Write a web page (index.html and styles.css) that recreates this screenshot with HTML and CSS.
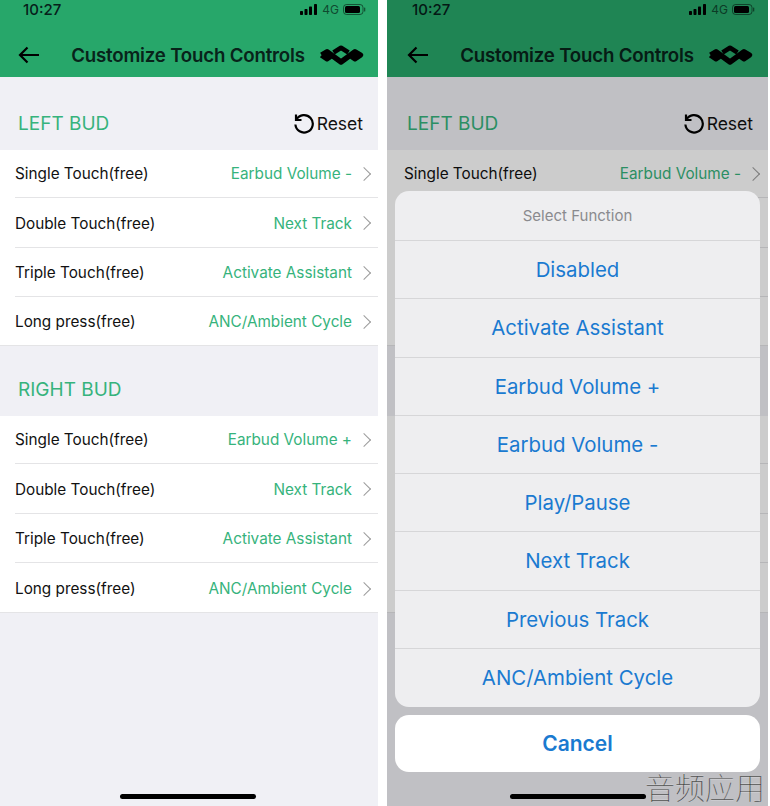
FILE: index.html
```html
<!DOCTYPE html>
<html lang="en">
<head>
    <meta charset="UTF-8">
    <meta name="viewport" content="width=device-width, initial-scale=1.0">
    <title>Customize Touch Controls</title>
    <link rel="stylesheet" href="styles.css">
</head>
<body>

<div class="shots">

    <div class="phone">
        <div class="top">
            <div class="status">
                <span class="time">10:27</span>
                <div class="status-icons">
                    <svg width="18" height="11" viewBox="0 0 18 11"><rect x="0" y="7" width="3" height="4" rx=".7"/><rect x="4.5" y="5" width="3" height="6" rx=".7"/><rect x="9" y="2.5" width="3" height="8.5" rx=".7"/><rect x="14" y="0" width="3" height="11" rx=".7"/></svg>
                    <span class="net">4G</span>
                    <svg width="23" height="11" viewBox="0 0 23 11"><rect x=".5" y=".5" width="19.5" height="10" rx="3" fill="none" stroke="#000" stroke-opacity=".5"/><rect x="2" y="2" width="15" height="7" rx="1.5"/><rect x="21" y="3.5" width="1.3" height="4" rx=".6" opacity=".5"/></svg>
                </div>
            </div>
            <div class="nav">
                <svg class="back" width="22" height="18" viewBox="0 0 22 18"><path d="M21 9H2M9.5 1.5L2 9l7.5 7.5" fill="none" stroke="#000" stroke-width="2.2"/></svg>
                <h1>Customize Touch Controls</h1>
                <svg class="logo" width="46" height="20" viewBox="0 0 46 20"><path d="M3.5 10l5.500-3.200 14 10.200L37 6.800l5.500 3.200-5.500 3.800-5.500-3.800M14.500 10L9 13.800 3.500 10" fill="none" stroke="#000" stroke-width="5.400" stroke-linejoin="round"/><path d="M15.500 7.500L23 2.800l7.500 4.700" fill="none" stroke="#000" stroke-width="4.600" stroke-linejoin="round"/></svg>
            </div>
        </div>

        <div class="section-head">
            <h2>LEFT BUD</h2>
            <div class="reset">
                <svg width="22" height="22" viewBox="0 0 22 22"><path d="M3 2.5V8h5.500M3.500 7.500A8.700 8.700 0 1 1 2.400 12.500" fill="none" stroke="#000" stroke-width="2.200"/></svg>
                Reset
            </div>
        </div>
        <div class="list">
            <div class="row"><span>Single Touch(free)</span><span class="value">Earbud Volume -</span><i class="chev"></i></div>
            <div class="row"><span>Double Touch(free)</span><span class="value">Next Track</span><i class="chev"></i></div>
            <div class="row"><span>Triple Touch(free)</span><span class="value">Activate Assistant</span><i class="chev"></i></div>
            <div class="row"><span>Long press(free)</span><span class="value">ANC/Ambient Cycle</span><i class="chev"></i></div>
        </div>

        <div class="section-head second">
            <h2>RIGHT BUD</h2>
        </div>
        <div class="list">
            <div class="row"><span>Single Touch(free)</span><span class="value">Earbud Volume +</span><i class="chev"></i></div>
            <div class="row"><span>Double Touch(free)</span><span class="value">Next Track</span><i class="chev"></i></div>
            <div class="row"><span>Triple Touch(free)</span><span class="value">Activate Assistant</span><i class="chev"></i></div>
            <div class="row"><span>Long press(free)</span><span class="value">ANC/Ambient Cycle</span><i class="chev"></i></div>
        </div>
        <div class="home"></div>
    </div>

    <div class="phone">
        <div class="top">
            <div class="status">
                <span class="time">10:27</span>
                <div class="status-icons">
                    <svg width="18" height="11" viewBox="0 0 18 11"><rect x="0" y="7" width="3" height="4" rx=".7"/><rect x="4.5" y="5" width="3" height="6" rx=".7"/><rect x="9" y="2.5" width="3" height="8.5" rx=".7"/><rect x="14" y="0" width="3" height="11" rx=".7"/></svg>
                    <span class="net">4G</span>
                    <svg width="23" height="11" viewBox="0 0 23 11"><rect x=".5" y=".5" width="19.5" height="10" rx="3" fill="none" stroke="#000" stroke-opacity=".5"/><rect x="2" y="2" width="15" height="7" rx="1.5"/><rect x="21" y="3.5" width="1.3" height="4" rx=".6" opacity=".5"/></svg>
                </div>
            </div>
            <div class="nav">
                <svg class="back" width="22" height="18" viewBox="0 0 22 18"><path d="M21 9H2M9.5 1.5L2 9l7.5 7.5" fill="none" stroke="#000" stroke-width="2.2"/></svg>
                <h1>Customize Touch Controls</h1>
                <svg class="logo" width="46" height="20" viewBox="0 0 46 20"><path d="M3.5 10l5.500-3.200 14 10.200L37 6.800l5.500 3.200-5.500 3.800-5.500-3.800M14.500 10L9 13.800 3.500 10" fill="none" stroke="#000" stroke-width="5.400" stroke-linejoin="round"/><path d="M15.500 7.500L23 2.800l7.500 4.700" fill="none" stroke="#000" stroke-width="4.600" stroke-linejoin="round"/></svg>
            </div>
        </div>

        <div class="section-head">
            <h2>LEFT BUD</h2>
            <div class="reset">
                <svg width="22" height="22" viewBox="0 0 22 22"><path d="M3 2.5V8h5.500M3.500 7.500A8.700 8.700 0 1 1 2.400 12.500" fill="none" stroke="#000" stroke-width="2.200"/></svg>
                Reset
            </div>
        </div>
        <div class="list">
            <div class="row"><span>Single Touch(free)</span><span class="value">Earbud Volume -</span><i class="chev"></i></div>
            <div class="row"><i class="chev"></i></div>
            <div class="row"><i class="chev"></i></div>
            <div class="row"><i class="chev"></i></div>
        </div>

        <div class="section-head second"></div>
        <div class="list">
            <div class="row"><i class="chev"></i></div>
            <div class="row"><i class="chev"></i></div>
            <div class="row"><i class="chev"></i></div>
            <div class="row"><i class="chev"></i></div>
        </div>
        <div class="home"></div>

        <div class="dim">
            <div class="sheet">
                <div class="sheet-title">Select Function</div>
                <div class="sheet-item">Disabled</div>
                <div class="sheet-item">Activate Assistant</div>
                <div class="sheet-item">Earbud Volume +</div>
                <div class="sheet-item">Earbud Volume -</div>
                <div class="sheet-item">Play/Pause</div>
                <div class="sheet-item">Next Track</div>
                <div class="sheet-item">Previous Track</div>
                <div class="sheet-item">ANC/Ambient Cycle</div>
            </div>
            <div class="cancel">Cancel</div>
        </div>
    </div>

</div>

<div class="watermark">音频应用</div>

</body>
</html>
```

FILE: styles.css
```css
body {
    font-family: Inter, "Noto Sans CJK SC", sans-serif;
    background-color: #fff;
    margin: 0;
    padding: 0;
    height: 806px;
    overflow: hidden;
    position: relative;
}

.shots {
    display: flex;
    gap: 9px;
}

.phone {
    position: relative;
    width: 378px;
    height: 806px;
    background-color: #f0f0f5;
    overflow: hidden;
}

.phone + .phone {
    width: 381px;
}

.top {
    background-color: #27a76a;
    height: 77px;
}

.status {
    display: flex;
    justify-content: space-between;
    align-items: center;
    height: 18px;
    padding: 0 12px 0 23px;
}

.time {
    font-size: 15px;
    font-weight: 500;
    color: #06201a;
}

.status-icons {
    display: flex;
    align-items: center;
    gap: 4px;
}

.net {
    font-size: 12px;
    color: #0f4a30;
}

.nav {
    display: flex;
    align-items: center;
    height: 42px;
    margin-top: 16px;
    padding: 0 14px 0 18px;
}

.back {
    flex: none;
    margin-right: 18px;
}

h1 {
    flex: 1;
    margin: 0;
    font-size: 18.7px;
    font-weight: 600;
    text-align: center;
    letter-spacing: -0.2px;
    color: #08231a;
}

.logo {
    flex: none;
}

.section-head {
    display: flex;
    justify-content: space-between;
    align-items: center;
    box-sizing: border-box;
    height: 73px;
    padding: 19px 15px 0 18px;
}

.section-head.second {
    height: 70px;
    padding-top: 16px;
}

h2 {
    margin: 0;
    font-size: 19px;
    font-weight: 400;
    color: #36b37c;
}

.reset {
    display: flex;
    align-items: center;
    gap: 2px;
    font-size: 17.5px;
    color: #111;
}

.list {
    background-color: #fff;
}

.row {
    display: flex;
    align-items: center;
    box-sizing: border-box;
    height: 49.5px;
    margin-left: 15px;
    padding-top: 2px;
    border-bottom: 1px solid #e4e4e6;
    font-size: 15.3px;
    color: #111;
}

.row:first-child {
    height: 48px;
    padding-top: 0;
}

.row:nth-child(3) {
    height: 49px;
}

.row:last-child {
    margin-left: 0;
    padding-left: 15px;
}

.second + .list .row:last-child {
    height: 50.5px;
    padding-top: 3px;
}

.value {
    margin-left: auto;
    color: #36b37c;
}

.chev {
    flex: none;
    box-sizing: border-box;
    width: 10px;
    height: 10px;
    margin: 0 9px 0 7px;
    border-top: 1.7px solid #9b9b9b;
    border-right: 1.7px solid #9b9b9b;
    transform: rotate(45deg);
}

.chev:only-child {
    margin-left: auto;
}

.home {
    position: absolute;
    left: 120px;
    bottom: 7px;
    width: 136px;
    height: 5px;
    border-radius: 3px;
    background-color: #000;
}

/* right shot sits 2px further in than its own left edge */
.phone + .phone .status {
    padding: 0 13px 0 25px;
}

.phone + .phone .nav {
    padding: 0 15px 0 20px;
}

.phone + .phone .section-head {
    padding-right: 15px;
    padding-left: 20px;
}

.phone + .phone .row {
    margin-left: 17px;
    padding-right: 1px;
}

.phone + .phone .row:last-child {
    margin-left: 0;
    padding-left: 17px;
}

.phone + .phone .home {
    left: 123px;
}

.dim {
    position: absolute;
    inset: 0;
    background-color: rgba(0, 0, 0, 0.2);
}

.sheet {
    position: absolute;
    left: 8px;
    top: 191px;
    width: 365px;
    height: 516px;
    border-radius: 14px;
    background-color: #eeeef0;
    overflow: hidden;
}

.sheet-title {
    height: 49px;
    line-height: 49px;
    text-align: center;
    font-size: 15px;
    color: #8a8a8e;
}

.sheet-item {
    height: 58.3px;
    line-height: 57.5px;
    border-top: 1px solid #d6d6d8;
    box-sizing: border-box;
    text-align: center;
    font-size: 20.4px;
    color: #1a7ad0;
}

.cancel {
    position: absolute;
    left: 8px;
    top: 715px;
    width: 365px;
    height: 57px;
    line-height: 57px;
    border-radius: 14px;
    background-color: #fff;
    text-align: center;
    font-size: 21px;
    font-weight: 600;
    color: #1a7ad0;
}

.watermark {
    position: absolute;
    left: 645px;
    top: 770px;
    font-size: 30px;
    font-weight: 100;
    line-height: 36px;
    color: #1a1a1a;
    -webkit-text-stroke: 0.3px rgba(255, 255, 255, 0.6);
}
```
